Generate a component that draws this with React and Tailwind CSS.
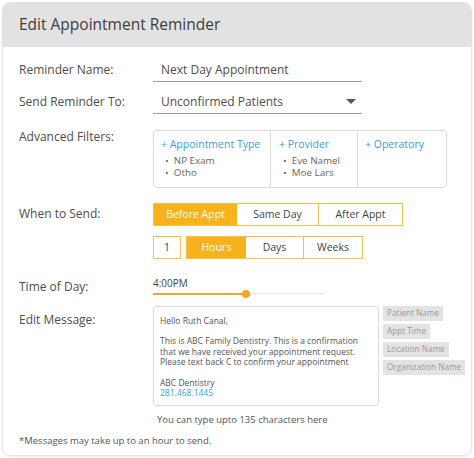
export default function App() {
  const font = { fontFamily: '"Open Sans", "Liberation Sans", sans-serif' };
  const amber = "bg-[#f7b21c]";

  return (
    <div className="w-[474px] h-[458px] bg-white p-[2px] text-[#4d4d4d]" style={font}>
      <div className="h-[454px] rounded-lg border border-[#e4e4e4] shadow-[0_1px_3px_rgba(0,0,0,0.08)] overflow-hidden">
        {/* Header */}
        <div className="h-[44px] bg-[#e2e2e2] flex items-center pl-[16px] text-[15.5px] text-[#3d3d3d]">
          Edit Appointment Reminder
        </div>

        <div className="pl-[16px] pt-[11px]">
          {/* Reminder name */}
          <div className="flex items-center h-[24px]">
            <div className="w-[134px] text-[12px]">Reminder Name:</div>
            <div className="w-[209px] h-[24px] border-b border-[#9a9a9a] pl-[8px] text-[12px] flex items-center">
              Next Day Appointment
            </div>
          </div>

          {/* Send to */}
          <div className="flex items-center h-[24px] mt-[8px]">
            <div className="w-[134px] text-[12px]">Send Reminder To:</div>
            <div className="w-[209px] h-[24px] border-b border-[#9a9a9a] pl-[8px] pr-[6px] text-[12px] flex items-center justify-between">
              <span>Unconfirmed Patients</span>
              <span className="w-0 h-0 border-l-[5px] border-r-[5px] border-t-[5px] border-l-transparent border-r-transparent border-t-[#555]" />
            </div>
          </div>

          {/* Advanced filters */}
          <div className="flex mt-[16px]">
            <div className="w-[134px] text-[12px] leading-[12px] pt-[1px]">Advanced Filters:</div>
            <div className="w-[294px] h-[58px] border border-[#dcdcdc] rounded-[4px] flex text-[10.5px]">
              <div className="w-[117px] border-r border-[#dcdcdc] pl-[7px] pt-[6px]">
                <div className="text-[#3a9fd6] leading-[14px]">+ Appointment Type</div>
                <div className="pl-[4px] mt-[4px] text-[9.8px] leading-[12px] text-[#666]">
                  <div>• &nbsp;NP Exam</div>
                  <div>• &nbsp;Otho</div>
                </div>
              </div>
              <div className="w-[87px] border-r border-[#dcdcdc] pl-[8px] pt-[6px]">
                <div className="text-[#3a9fd6] leading-[14px]">+ Provider</div>
                <div className="pl-[4px] mt-[4px] text-[9.8px] leading-[12px] text-[#666]">
                  <div>• &nbsp;Eve Namel</div>
                  <div>• &nbsp;Moe Lars</div>
                </div>
              </div>
              <div className="flex-1 pl-[7px] pt-[6px]">
                <div className="text-[#3a9fd6] leading-[14px]">+ Operatory</div>
              </div>
            </div>
          </div>

          {/* When to send */}
          <div className="flex mt-[15px]">
            <div className="w-[134px] text-[12px] pt-[2px]">When to Send:</div>
            <div>
              <div className="flex h-[23px] text-[10.5px] border border-[#f7c04a]">
                <div className={`w-[83px] ${amber} text-white flex items-center justify-center`}>Before Appt</div>
                <div className="w-[82px] border-r border-[#f7c04a] flex items-center justify-center text-[#444]">Same Day</div>
                <div className="w-[83px] flex items-center justify-center text-[#444]">After Appt</div>
              </div>
              <div className="flex mt-[10px] h-[23px] text-[10.5px]">
                <div className="w-[28px] border border-[#f7c04a] flex items-center justify-center text-[#444]">1</div>
                <div className="flex ml-[5px] border border-[#f7c04a]">
                  <div className={`w-[59px] ${amber} text-white flex items-center justify-center`}>Hours</div>
                  <div className="w-[58px] border-r border-[#f7c04a] flex items-center justify-center text-[#444]">Days</div>
                  <div className="w-[58px] flex items-center justify-center text-[#444]">Weeks</div>
                </div>
              </div>
            </div>
          </div>

          {/* Time of day */}
          <div className="flex mt-[16px]">
            <div className="w-[134px] text-[12px] pt-[3px]">Time of Day:</div>
            <div className="w-[170px] pt-[2px]">
              <div className="text-[10px] leading-[12px] text-[#444]">4:00PM</div>
              <div className="relative h-[10px]">
                <div className="absolute left-0 right-0 top-[4px] h-[1px] bg-[#e4e4e4]" />
                <div className="absolute left-0 w-[93px] top-[4px] h-[2px] bg-[#f5a623]" />
                <div className="absolute left-[89px] top-[1px] w-[8px] h-[8px] rounded-full bg-[#f5a623]" />
              </div>
            </div>
          </div>

          {/* Edit message */}
          <div className="flex mt-[7px]">
            <div className="w-[134px] text-[12px] pt-[5px]">Edit Message:</div>
            <div>
              <div className="w-[226px] h-[100px] border border-[#dcdcdc] rounded-[4px] px-[6px] pt-[9px] text-[8.5px] leading-[10.4px] text-[#555]">
                <div>Hello Ruth Canal,</div>
                <div className="mt-[10px]">
                  This is ABC Family Dentistry. This is a confirmation<br />
                  that we have received your appointment request.<br />
                  Please text back C to confirm your appointment
                </div>
                <div className="mt-[10px]">ABC Dentistry</div>
                <div className="text-[#3a9fd6]">281.468.1445</div>
              </div>
              <div className="text-[9.5px] text-[#555] pl-[4px] mt-[7px]">You can type upto 135 characters here</div>
            </div>
            <div className="ml-[4px] flex flex-col items-start gap-[3px] text-[8.2px] text-[#999]">
              <div className="bg-[#e3e3e3] h-[15px] px-[4px] flex items-center">Patient Name</div>
              <div className="bg-[#e3e3e3] h-[15px] px-[4px] flex items-center">Appt Time</div>
              <div className="bg-[#e3e3e3] h-[15px] px-[4px] flex items-center">Location Name</div>
              <div className="bg-[#e3e3e3] h-[15px] px-[4px] flex items-center">Organization Name</div>
            </div>
          </div>

          <div className="text-[9.5px] text-[#555] mt-[7px]">*Messages may take up to an hour to send.</div>
        </div>
      </div>
    </div>
  );
}
